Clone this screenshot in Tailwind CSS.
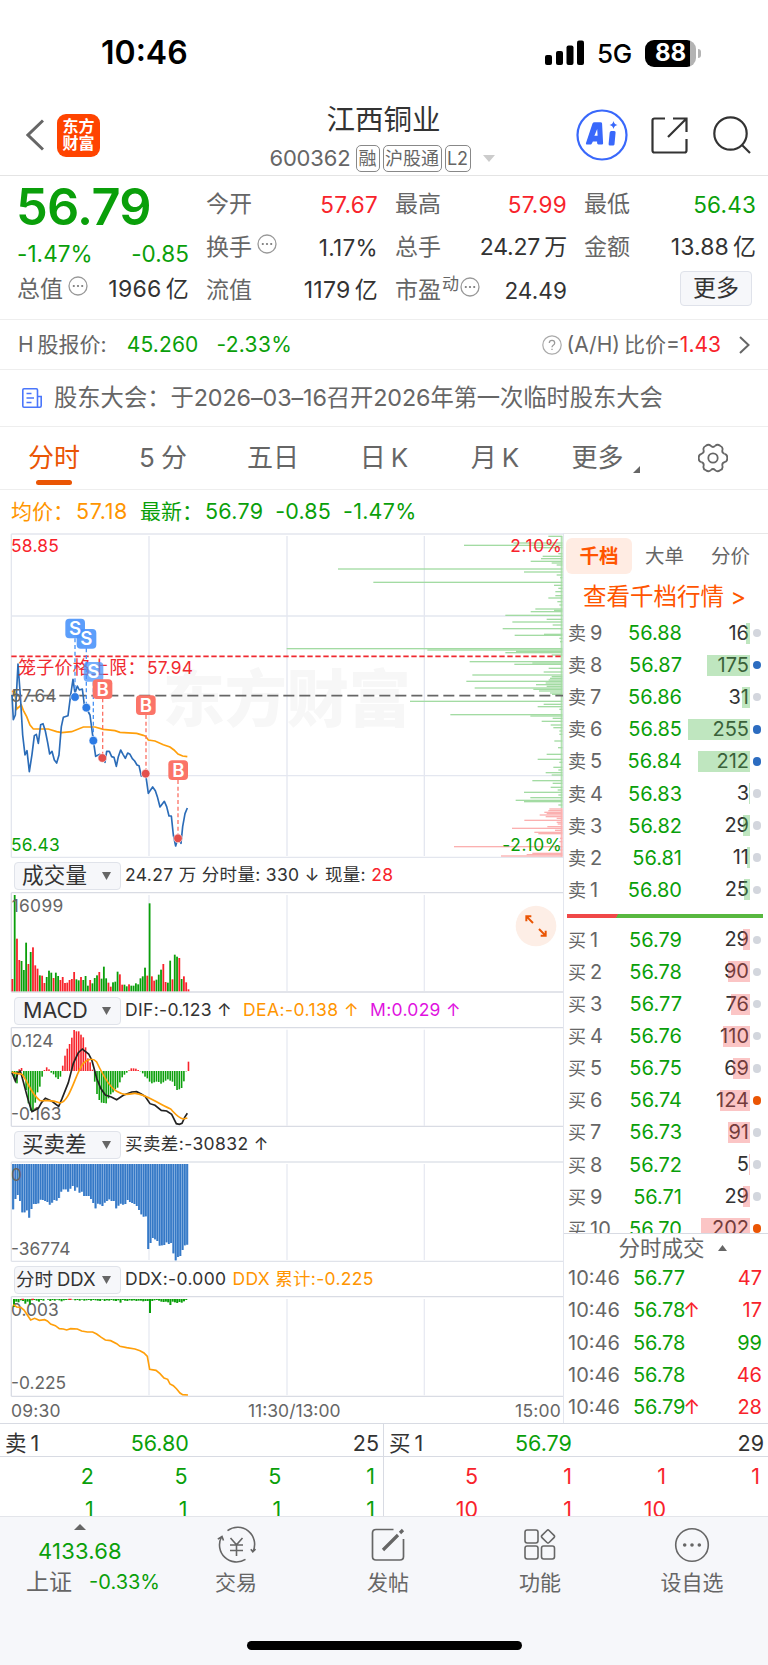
<!DOCTYPE html>
<html lang="zh-CN">
  <head>
    <meta charset="UTF-8" />
    <meta name="viewport" content="width=device-width, initial-scale=1.0" />
    <title>江西铜业 600362</title>
    <script src="https://cdn.jsdelivr.net/npm/@tailwindcss/browser@4"></script>
  </head>
  <body class="bg-white text-[#333] font-['Inter','Noto_Sans_CJK_SC',sans-serif] whitespace-nowrap">
    <div class="w-[768px] h-[1665px] overflow-hidden flex flex-col">
      <!-- Status bar -->
      <div class="h-[95px] shrink-0 flex items-center justify-between pl-[101px] pr-[67px] pt-[11px] text-black">
        <span class="text-[32px] font-semibold">10:46</span>
        <div class="flex items-center">
          <svg class="w-10 h-[26px]" viewBox="0 0 40 26">
            <rect x="0" y="15" width="7" height="10" rx="2" />
            <rect x="11" y="11" width="7" height="14" rx="2" />
            <rect x="21.500" y="5.500" width="7" height="19.500" rx="2" />
            <rect x="32" y="0.500" width="7" height="24.500" rx="2" />
          </svg>
          <span class="ml-[12px] text-[26px] font-medium tracking-[-0.2px]">5G</span>
          <div class="ml-[13px] w-[51px] h-[27px] rounded-[9px] bg-[linear-gradient(90deg,#000_45px,#b3b3b3_45px)] flex items-center justify-center text-white text-[24px] font-bold leading-none">88</div>
          <div class="ml-[2px] w-[3px] h-[9px] rounded-r-full bg-[#b3b3b3]"></div>
        </div>
      </div>

      <!-- Title bar -->
      <header class="h-[81px] shrink-0 border-b border-[#e4e4e4] grid grid-cols-[268px_230px_1fr]">
        <div class="flex items-center pl-[26px]">
          <svg class="w-[18px] h-8" viewBox="0 0 18 32" fill="none" stroke="#666" stroke-width="3"><path d="M17 1.500 2 16l15 14.500" /></svg>
          <div class="ml-[13px] w-[43px] h-[43px] rounded-[9px] bg-[#ff4400] text-white text-[16px] font-bold leading-[17px] text-center pt-[4px]">东方<br />财富</div>
        </div>
        <div class="flex flex-col items-center">
          <h1 class="mt-[7px] ml-px text-[28.500px] leading-[36px] h-[39px]">江西铜业</h1>
          <div class="flex items-center text-[#666] h-7 mt-[3px] mr-[2px]">
            <span class="text-[22px] tracking-[-0.2px] w-[86px]">600362</span>
            <span class="h-[27px] w-6 border border-[#888] rounded-[5px] text-[18px] leading-[25px] text-center flex justify-center">融</span>
            <span class="ml-[3px] h-[27px] w-[59px] border border-[#888] rounded-[5px] text-[18px] leading-[25px] flex justify-center">沪股通</span>
            <span class="ml-[3px] h-[27px] w-[26px] border border-[#888] rounded-[5px] text-[18px] leading-[25px] flex justify-center">L2</span>
            <svg class="ml-3 w-3 h-[7px]" viewBox="0 0 12 7" fill="#ccc"><path d="M0 0h12L6 7z" /></svg>
          </div>
        </div>
        <div class="flex items-center pl-[78px]">
          <svg class="w-[52px] h-[52px]" viewBox="0 0 52 52">
            <circle cx="26" cy="26" r="24.500" fill="none" stroke="#3968fb" stroke-width="2.200" />
            <path fill="#3968fb" fill-rule="evenodd" d="M16.500 14.500q.600-1.200 2-1.200h6q1.500 0 1.600 1.400l1 19.500q0 1.300-1.200 1.300h-3.400q-1.400 0-1.400-1.400v-1.600h-4.200l-1.200 2.200q-.500.900-1.500.9h-3.200q-1.700 0-1-1.500zM21.200 20l-2.800 6.800h3.200zM33.700 23.500q.200-1.500 1.700-1.500h2.800q1.600 0 1.400 1.500l-1.100 11.700q-.100 1.300-1.500 1.300h-3q-1.600 0-1.400-1.500zM37.500 12q.700 3.300 4 4-3.300.700-4 4-.700-3.300-4-4 3.300-.700 4-4z" />
          </svg>
          <svg class="ml-[23px] w-[37px] h-[37px]" viewBox="0 0 37 37" fill="none" stroke="#333" stroke-width="2.200">
            <path d="M14 1.500H3.500q-2 0-2 2v30q0 2 2 2h30q2 0 2-2V22M22 1.500h13.500V15M35 2 17 20" />
          </svg>
          <svg class="ml-[24px] w-[40px] h-[38px]" viewBox="0 0 40 38" fill="none" stroke="#333" stroke-width="2.200">
            <circle cx="18.500" cy="17.500" r="16.200" /><path d="M30 29l8 8" />
          </svg>
        </div>
      </header>

      <!-- Quote -->
      <section class="h-[144px] shrink-0 border-b border-[#eee] grid grid-cols-4 gap-x-[17px] pl-[17px] pr-[12px] text-[23px] text-[#333]">
        <div>
          <div class="h-[62px] -ml-px text-[50.500px] leading-[62px] font-semibold tracking-[-0.700px] text-[#0a9f0a]">56.79</div>
          <div class="h-[30px] pt-px flex justify-between items-center text-[22.500px] tracking-[0.050px] text-[#0a9f0a]"><span>-1.47%</span><span>-0.85</span></div>
          <div class="h-[43px] flex items-center">
            <span class="text-[#666]">总值</span>
            <svg class="ml-[5px] mb-2 w-5 h-5" viewBox="0 0 20 20"><use href="#dots" /></svg>
            <span class="ml-auto tracking-[0.300px]">1966<span class="ml-1">亿</span></span>
          </div>
        </div>
        <div class="pt-[7px]">
          <div class="h-[43px] flex items-center"><span class="text-[#666]">今开</span><span class="ml-auto text-[22.500px] tracking-[0.300px] text-[#f8232b]">57.67</span></div>
          <div class="h-[43px] flex items-center">
            <span class="text-[#666]">换手</span>
            <svg class="ml-[5px] mb-2 w-5 h-5" viewBox="0 0 20 20"><use href="#dots" /></svg>
            <span class="ml-auto text-[22.500px] tracking-[0.300px]">1.17%</span>
          </div>
          <div class="h-[43px] flex items-center"><span class="text-[#666]">流值</span><span class="ml-auto tracking-[0.300px]">1179<span class="ml-1">亿</span></span></div>
        </div>
        <div class="pt-[7px]">
          <div class="h-[43px] flex items-center"><span class="text-[#666]">最高</span><span class="ml-auto text-[22.500px] tracking-[0.300px] text-[#f8232b]">57.99</span></div>
          <div class="h-[43px] flex items-center"><span class="text-[#666]">总手</span><span class="ml-auto tracking-[-0.200px]">24.27<span class="ml-1">万</span></span></div>
          <div class="h-[43px] flex items-center text-[#666]">
            <span>市盈</span><span class="text-[17px] mb-3 ml-px">动</span>
            <svg class="ml-px mb-2 w-5 h-5" viewBox="0 0 20 20"><use href="#dots" /></svg>
            <span class="ml-auto text-[22.500px] tracking-[0.100px] text-[#333]">24.49</span>
          </div>
        </div>
        <div class="pt-[7px]">
          <div class="h-[43px] flex items-center"><span class="text-[#666]">最低</span><span class="ml-auto text-[22.500px] tracking-[0.200px] text-[#0a9f0a]">56.43</span></div>
          <div class="h-[43px] flex items-center"><span class="text-[#666]">金额</span><span class="ml-auto tracking-[0.100px]">13.88<span class="ml-1">亿</span></span></div>
          <div class="h-[43px] flex items-center justify-end pr-1"><span class="w-[72px] h-[35px] mb-1 border border-[#dfe2ea] rounded bg-[#f6f7fa] flex items-center justify-center">更多</span></div>
        </div>
      </section>

      <!-- H share price -->
      <section class="h-[50px] shrink-0 border-b border-[#eee] flex items-center pl-[18px] pr-[18px] text-[21px] text-[#666]">
        <span>H<span class="ml-1">股报价:</span></span>
        <span class="ml-[20px] tracking-[0.150px] text-[#0a9f0a]">45.260</span>
        <span class="ml-[18px] tracking-[0.300px] text-[#0a9f0a]">-2.33%</span>
        <svg class="ml-auto w-5 h-5" viewBox="0 0 20 20" fill="none">
          <circle cx="10" cy="10" r="9.200" stroke="#aaa" stroke-width="1.200" />
          <path d="M7.300 8q0-2.700 2.700-2.700T12.700 8q0 1.300-1.500 2.200Q10 11 10 12.200M10 13.700v1.400" stroke="#999" stroke-width="1.300" />
        </svg>
        <span class="ml-[5px]">(A/H)<span class="ml-1">比价</span>=<span class="text-[#f8232b]">1.43</span></span>
        <svg class="ml-[18px] w-[11px] h-[18px]" viewBox="0 0 11 18" fill="none" stroke="#666" stroke-width="2"><path d="M1 1l8.500 8L1 17" /></svg>
      </section>

      <!-- Notice -->
      <section class="h-[57px] shrink-0 border-b border-[#eee] flex items-center pl-[22px] text-[23.300px] text-[#666]">
        <svg class="w-5 h-5" viewBox="0 0 20 20" fill="none" stroke="#4a76fb" stroke-width="1.600">
          <path d="M15.500 19V2q0-1.200-1.200-1.200H2Q.800.800.800 2v16q0 1.200 1.200 1.200h15.800q1.400 0 1.400-1.400V8.500h-3.700M4.500 5.500h5M4.500 10h7.500M4.500 14.500h5" />
        </svg>
        <span class="ml-[12px]">股东大会：</span><span class="tracking-[-0.080px]">于2026–03–16召开2026年第一次临时股东大会</span>
      </section>

      <!-- Period tabs -->
      <nav class="h-[63px] shrink-0 border-b border-[#eee] flex items-start pt-[10px] text-[26px] leading-[42px] text-[#666]">
        <div class="w-[108px] flex flex-col items-center text-[#ea5504]"><span class="h-[42px]">分时</span><span class="w-9 h-[5px] rounded-full bg-[#ea5504] mt-px"></span></div>
        <div class="w-[110px] text-center">5<span class="ml-[6px]">分</span></div>
        <div class="w-[110px] text-center">五日</div>
        <div class="w-[112px] text-center">日<span class="ml-[5px]">K</span></div>
        <div class="w-[110px] text-center">月<span class="ml-[5px]">K</span></div>
        <div class="w-[111px] flex items-end justify-center">更多<svg class="ml-[9px] mb-[6px] w-[7px] h-[7px]" viewBox="0 0 7 7" fill="#666"><path d="M7 0v7H0z" /></svg></div>
        <div class="flex-1 flex justify-center pr-[3px]">
          <svg class="mt-[6px] w-[30px] h-[30px]" viewBox="-15 -15 30 30" fill="none" stroke="#666" stroke-width="1.800">
            <g id="tooth"><path id="t" d="M11.600-4.200Q14.600-3.400 14.200 0 14.600 3.400 11.600 4.200 8.660 5 9.440 7.950" /></g>
            <use href="#t" transform="rotate(60)" /><use href="#t" transform="rotate(120)" /><use href="#t" transform="rotate(180)" />
            <use href="#t" transform="rotate(240)" /><use href="#t" transform="rotate(300)" />
            <circle r="4.700" />
          </svg>
        </div>
      </nav>

      <!-- Average / latest -->
      <div class="h-[43px] shrink-0 flex items-center pl-[11px] text-[21px] text-[#0a9f0a]">
        <span class="text-[#ff9500]">均价：<span class="ml-[2px] text-[21.500px] tracking-[0.600px]">57.18</span></span>
        <span class="ml-[12px]">最新：<span class="ml-[2px] text-[21.500px] tracking-[0.300px]">56.79</span></span>
        <span class="ml-[12px] text-[21.500px] tracking-[0.150px]">-0.85</span>
        <span class="ml-[12px] text-[21.500px] tracking-[0.250px]">-1.47%</span>
      </div>

      <main class="h-[890px] shrink-0 flex">
        <!-- Charts; plots use 3 units per pixel -->
        <div class="w-[564px] shrink-0 border-r border-[#e3e6ee] flex flex-col">
          <svg class="w-[563px] h-[325px] shrink-0" viewBox="0 24 1689 975" fill="none">
            <text x="488" y="590" font-size="186" font-weight="900" fill="#f7f7f7">东方财富</text>
            <path d="M34 273H1689M34 752H1689M447 33V993M861 33V993M1273 33V993" stroke="#e4e7f0" stroke-width="4" />
            <path d="M34 27H1689M34 27V997M34 997H1689" stroke="#e3e6ee" stroke-width="4" />
            <g id="depth"></g>
            <path d="M34 394H1689" stroke="#f02a30" stroke-width="5" stroke-dasharray="16 8" />
            <path d="M34 512H1689" stroke="#666" stroke-width="5" stroke-dasharray="33 15" />
            <polyline stroke="#ff9f0a" stroke-width="5" points="36,500 44,496 50,552 64,540 70,556 80,575 90,600 100,612 145,612 170,620 185,623 215,620 250,606 285,606 310,613 345,617 360,622 410,625 430,631 437,634 445,645 465,648 490,659 510,666 522,675 534,687 548,693 562,695" />
            <polyline stroke="#2b6cb8" stroke-width="5" stroke-linejoin="round" points="36,510 40,584 46,570 54,417 61,512 68,630 75,690 81,677 88,740 96,688 103,632 109,628 115,655 122,599 129,596 136,618 143,653 149,687 156,679 163,705 170,714 177,690 184,605 190,577 204,572 212,510 219,463 225,505 232,483 238,495 247,492 253,540 262,555 270,570 280,647 287,694 300,688 315,712 320,679 328,679 335,695 342,697 349,724 355,695 362,675 369,688 376,700 383,684 390,688 397,701 404,708 411,720 417,722 424,753 437,748 445,805 458,786 466,797 472,815 480,846 493,829 500,845 507,873 514,873 520,930 527,963 534,940 543,955 548,905 555,866 562,849" />
            <g font-size="52" font-family="Inter, 'Noto Sans CJK SC'" letter-spacing="0.8">
              <text x="33" y="80" fill="#f8232b">58.85</text>
              <text x="33" y="978" fill="#0a9f0a">56.43</text>
              <text x="1687" y="80" text-anchor="end" fill="#f8232b" letter-spacing="1.8">2.10%</text>
              <text x="1687" y="978" text-anchor="end" fill="#0a9f0a" letter-spacing="1.8">-2.10%</text>
              <text x="33" y="531" fill="#666">57.64</text>
              <text x="54" y="446" font-size="54" fill="#f02a30">笼子价格上限：<tspan dx="3" font-size="52">57.94</tspan></text>
            </g>
            <g stroke-width="4" stroke-dasharray="12 8">
              <path d="M225 340V510M259 370V545M280 470V645" stroke="#4a94f5" />
              <path d="M308 520V695M438 570V745M534 765V940" stroke="#fb7468" />
            </g>
            <g fill="#2c7be5" stroke="#fff" stroke-opacity=".6" stroke-width="3"><circle cx="225" cy="516" r="13" /><circle cx="259" cy="548" r="13" /><circle cx="280" cy="647" r="13" /></g>
            <g fill="#e34f4c" stroke="#fff" stroke-opacity=".6" stroke-width="3"><circle cx="307" cy="699" r="13" /><circle cx="437" cy="746" r="13" /><circle cx="534" cy="940" r="13" /></g>
            <g fill="#4a94fb" fill-opacity=".9"><rect x="196" y="281" width="59" height="59" rx="12" /><rect x="230" y="312" width="59" height="59" rx="12" /><rect x="251" y="411" width="59" height="59" rx="12" fill-opacity=".75" /></g>
            <g fill="#fb7468"><rect x="278" y="463" width="59" height="59" rx="12" /><rect x="408" y="511" width="59" height="59" rx="12" /><rect x="505" y="706" width="59" height="59" rx="12" /></g>
            <g fill="#fff" font-size="56" font-weight="600" text-anchor="middle" font-family="Inter">
              <text x="225" y="330">S</text><text x="259" y="361">S</text><text x="280" y="460">S</text>
              <text x="308" y="513">B</text><text x="438" y="561">B</text><text x="535" y="756">B</text>
            </g>
          </svg>

          <div class="h-[34px] shrink-0 flex items-center pl-[14px] pt-px text-[17.500px] tracking-[0.200px]">
            <span class="w-[107px] h-[28px] border border-[#e0e3ea] rounded bg-[#f6f7fa] flex items-center pl-[7px] text-[21.500px]">成交量<svg class="ml-auto mr-[9px] w-[9px] h-[8px]" viewBox="0 0 9 8" fill="#666"><path d="M0 0h9L4.500 8z" /></svg></span>
            <span class="ml-[4px] tracking-[0.330px]">24.27 万 分时量: 330 ↓ 现量: <span class="text-[#f8232b]">28</span></span>
          </div>
          <svg class="w-[563px] h-[101px] shrink-0" viewBox="0 96 1689 303" fill="none">
            <path d="M447 105V393M861 105V393M1273 105V393" stroke="#e8eaf2" stroke-width="4" />
            <path d="M34 98H1689M34 98V396M34 396H1689" stroke="#d9dce4" stroke-width="4" />
            <g id="volume"></g>
            <text x="35" y="156" font-size="52" letter-spacing="1" fill="#666">16099</text>
            <circle cx="1608" cy="198" r="61" fill="#fdeee6" />
            <path d="M1599 189l-19-19M1579 184v-15h15M1617 207l19 19M1637 212v15h-15" stroke="#ea5504" stroke-width="6" />
          </svg>

          <div class="h-[34px] shrink-0 flex items-center pl-[14px] pt-px text-[17.500px]">
            <span class="w-[107px] h-[28px] border border-[#e0e3ea] rounded bg-[#f6f7fa] flex items-center pl-2 text-[21.500px]">MACD<svg class="ml-auto mr-[9px] w-[9px] h-[8px]" viewBox="0 0 9 8" fill="#666"><path d="M0 0h9L4.500 8z" /></svg></span>
            <span class="ml-[4px] tracking-[0.330px]">DIF:-0.123 ↑</span>
            <span class="ml-[11px] tracking-[0.450px] text-[#ff9500]">DEA:-0.138 ↑</span>
            <span class="ml-[11px] tracking-[0.300px] text-[#e012e0]">M:0.029 ↑</span>
          </div>
          <svg class="w-[563px] h-[100px] shrink-0" viewBox="0 501 1689 300" fill="none">
            <path d="M447 509V797M861 509V797M1273 509V797" stroke="#e8eaf2" stroke-width="4" />
            <path d="M34 503H1689M34 503V799M34 799H1689" stroke="#d9dce4" stroke-width="4" />
            <text x="33" y="561" font-size="52" fill="#666">0.124</text>
            <text x="33" y="780" font-size="52" fill="#666">-0.163</text>
            <g id="macd"></g>
            <path stroke="#222" stroke-width="5" d="M36 638L46 663 54 638 61 634C72 668 82 720 96 755L115 745 125 727 136 715 156 724 176 739 186 716 205 668 220 610 235 578 247 567 266 582 276 602 290 655 302 685 316 705 334 711 350 719 370 706 395 696 410 695 425 703 436 710 450 731 465 736 484 751 500 753 515 763 529 791 538 793 546 790 554 772 562 760" />
            <path stroke="#ff9f0a" stroke-width="5" d="M36 636C48 644 58 638 66 643C84 665 92 700 120 722C140 724 150 717 180 729C210 725 226 640 250 610C266 595 280 594 290 606C306 640 326 680 350 694C370 706 380 704 405 700C440 702 470 730 512 747C526 762 536 775 550 777L562 774" />
          </svg>

          <div class="h-[34px] shrink-0 flex items-center pl-[14px] pt-px text-[17.500px]">
            <span class="w-[107px] h-[28px] border border-[#e0e3ea] rounded bg-[#f6f7fa] flex items-center pl-[7px] text-[21.500px]">买卖差<svg class="ml-auto mr-[9px] w-[9px] h-[8px]" viewBox="0 0 9 8" fill="#666"><path d="M0 0h9L4.500 8z" /></svg></span>
            <span class="ml-[4px] tracking-[0.400px]">买卖差:-30832 ↑</span>
          </div>
          <svg class="w-[563px] h-[101px] shrink-0" viewBox="0 93 1689 303" fill="none">
            <path d="M447 102V390M861 102V390M1273 102V390" stroke="#e8eaf2" stroke-width="4" />
            <path d="M34 96H1689M34 96V394M34 394H1689" stroke="#e0e3ea" stroke-width="4" />
            <g id="spread"></g>
            <text x="33" y="154" font-size="52" fill="#666">0</text>
            <text x="33" y="374" font-size="52" fill="#666">-36774</text>
          </svg>

          <div class="h-[34px] shrink-0 flex items-center pl-[14px] pt-px text-[17.500px]">
            <span class="w-[107px] h-[28px] border border-[#e0e3ea] rounded bg-[#f6f7fa] flex items-center pl-px text-[18.500px]">分时<span class="ml-1">DDX</span><svg class="ml-auto mr-[9px] w-[9px] h-[8px]" viewBox="0 0 9 8" fill="#666"><path d="M0 0h9L4.500 8z" /></svg></span>
            <span class="ml-[4px] tracking-[0.350px]">DDX:-0.000</span>
            <span class="ml-[6px] tracking-[0.300px] text-[#ff9500]">DDX 累计:-0.225</span>
          </div>
          <svg class="w-[563px] h-[101px] shrink-0" viewBox="0 498 1689 303" fill="none">
            <path d="M447 507V796M861 507V796M1273 507V796" stroke="#e8eaf2" stroke-width="4" />
            <path d="M34 500H1689M34 500V799M34 799H1689" stroke="#d9dce4" stroke-width="4" />
            <text x="33" y="559" font-size="52" fill="#666">0.003</text>
            <text x="33" y="778" font-size="52" fill="#666">-0.225</text>
            <g id="ddx"></g>
            <path d="M64 508h8M94 508h8M205 508h10" stroke="#f8232b" stroke-width="4" />
            <polyline stroke="#ff9f0a" stroke-width="5" points="40,524 50,531 62,532 72,540 84,558 92,570 104,565 118,571 134,569 142,573 152,582 166,587 178,596 190,597 200,600 212,596 232,597 245,603 262,606 278,606 290,612 304,622 316,630 332,632 350,641 360,649 380,653 405,657 420,662 432,669 442,679 449,718 468,721 480,731 492,744 503,748 510,762 520,767 530,777 540,789 548,794 564,795" />
          </svg>

          <div class="h-[26px] flex items-center pl-[11px] pt-[2px] pr-[2px] text-[17.500px] text-[#666]">
            <span class="w-[237px] tracking-[0.200px]">09:30</span><span>11:30/13:00</span><span class="ml-auto tracking-[0.200px]">15:00</span>
          </div>
        </div>

        <!-- Order book -->
        <aside class="flex-1 flex flex-col border-t border-[#e8e8e8]">
          <div class="h-[44px] shrink-0 flex pl-[2px] pt-1 text-[19.500px] leading-[36px] text-[#666]">
            <span class="w-[66px] h-9 rounded-md bg-[#ffece3] text-center font-bold text-[#ff5500]">千档</span>
            <span class="w-[65px] text-center">大单</span>
            <span class="w-[67px] text-center">分价</span>
          </div>
          <div class="h-[39px] shrink-0 pl-[19px] text-[23.500px] leading-[38px] text-[#ff5500]">查看千档行情 <span>&gt;</span></div>
          <div id="asks" class="shrink-0"></div>
          <div class="h-[18px] shrink-0 pl-[3px] pt-[8px]"><div class="w-[196px] h-[4px] bg-[linear-gradient(125deg,#f04848_42px,#58b840_42px)]"></div></div>
          <div id="bids" class="h-[309px] shrink-0 overflow-hidden"></div>
          <div class="h-[29px] shrink-0 border-t border-[#d8dbe3] flex items-center justify-center gap-[13px] pl-[17px] pr-1 text-[21.500px] text-[#666]">分时成交<svg class="w-[9px] h-[6px]" viewBox="0 0 9 6" fill="#666"><path d="M4.500 0 9 6H0z" /></svg></div>
          <div id="trades"></div>
        </aside>
      </main>

      <!-- Level-2 queue -->
      <section class="h-[93px] shrink-0 overflow-hidden grid grid-cols-2 text-[21.500px]">
        <div class="border-r border-[#d8dbe3]">
          <div class="h-[34px] border-y border-[#d8dbe3] grid grid-cols-3 items-center pt-[3px] pl-[5px] pr-1"><span>卖<span class="ml-1">1</span></span><span class="text-[#0a9f0a] pl-px">56.80</span><span class="text-right">25</span></div>
          <div id="ask_queue" class="grid grid-cols-4 pr-[8px] leading-[33px] pt-[3px] text-right text-[#0a9f0a]"></div>
        </div>
        <div>
          <div class="h-[34px] border-y border-[#d8dbe3] grid grid-cols-3 items-center pt-[3px] pl-[5px] pr-1"><span>买<span class="ml-1">1</span></span><span class="text-[#0a9f0a] pl-px">56.79</span><span class="text-right">29</span></div>
          <div id="bid_queue" class="grid grid-cols-4 pr-[8px] leading-[33px] pt-[3px] text-right text-[#f8232b]"></div>
        </div>
      </section>

      <!-- Bottom bar -->
      <footer class="flex-1 bg-[#f6f7fa] border-t border-[#e3e5ea] flex flex-col text-[#666]">
        <div class="h-[124px] flex">
          <div class="w-[160px] flex flex-col items-center">
            <svg class="mt-[7px] w-3 h-[6px]" viewBox="0 0 12 6" fill="#666"><path d="M6 0l6 6H0z" /></svg>
            <span class="mt-[5px] h-8 leading-8 text-[22px] tracking-[0.200px] text-[#0a9f0a]">4133.68</span>
            <div class="h-[30px] w-[134px] ml-[26px] flex items-center justify-between text-[23px]">上证<span class="text-[20px] text-[#0a9f0a]">-0.33%</span></div>
          </div>
          <div class="w-[152px] flex flex-col items-center pt-[9px]">
            <svg class="w-[39px] h-[38px]" viewBox="0 0 39 38" fill="none" stroke="#666" stroke-width="1.600">
              <path d="M10.500 4.600A17 17 0 0 1 36 25.500M38.500 23l-2.700 2.700-2-2.500M28.500 33.400A17 17 0 0 1 4.500 11M.800 13.200 5 10.500l1.500 4M13.500 12l6 6.800 6-6.800M13 19h13M13 24.500h13M19.500 19v11" />
            </svg>
            <span class="mt-[3px] h-8 leading-8 text-[21px]">交易</span>
          </div>
          <div class="w-[152px] flex flex-col items-center pt-[9px]">
            <svg class="w-[34px] h-[38px]" viewBox="0 0 34 38" fill="none" stroke="#666" stroke-width="1.700">
              <path d="M22.500 3.500H5q-3.500 0-3.500 3.500v23.500Q1.500 34 5 34h24q3.500 0 3.500-3.500V13" />
              <path d="M12 24 27 9M29 7l3-3" stroke-width="3.200" />
            </svg>
            <span class="mt-[3px] h-8 leading-8 text-[21px]">发帖</span>
          </div>
          <div class="w-[152px] flex flex-col items-center pt-[9px]">
            <svg class="w-[32px] h-[38px]" viewBox="0 0 32 38" fill="none" stroke="#666" stroke-width="1.600">
              <rect x="1" y="4" width="13" height="13" rx="2.200" /><rect x="1" y="20" width="13" height="13" rx="2.200" /><rect x="17.500" y="20" width="13" height="13" rx="2.200" />
              <rect x="19" y="5.500" width="10" height="10" rx="1.500" transform="rotate(45 24 10.500)" />
            </svg>
            <span class="mt-[3px] h-8 leading-8 text-[21px]">功能</span>
          </div>
          <div class="w-[152px] flex flex-col items-center pt-[9px]">
            <svg class="w-[36px] h-[38px]" viewBox="0 0 36 38" fill="none" stroke="#666" stroke-width="1.600">
              <circle cx="18" cy="19" r="16.300" />
              <g fill="#666" stroke="none"><circle cx="10.700" cy="19" r="1.800" /><circle cx="18" cy="19" r="1.800" /><circle cx="25.300" cy="19" r="1.800" /></g>
            </svg>
            <span class="mt-[3px] h-8 leading-8 text-[21px]">设自选</span>
          </div>
        </div>
        <div class="mx-auto w-[275px] h-[9px] rounded-full bg-black"></div>
      </footer>
    </div>

    <svg class="hidden">
      <symbol id="dots" viewBox="0 0 20 20">
        <circle cx="10" cy="10" r="9" fill="none" stroke="#999" stroke-width="1.300" />
        <circle cx="5.800" cy="10" r="1.100" fill="#777" /><circle cx="10" cy="10" r="1.100" fill="#777" /><circle cx="14.200" cy="10" r="1.100" fill="#777" />
      </symbol>
    </svg>

    <script>
      const GREEN = "#0a9f0a";
      const RED = "#f8232b";
      const el = (id) => document.getElementById(id);
      const rect = (x, y, w, h, fill) =>
        `<rect x="${x}" y="${y}" width="${w}" height="${h}" fill="${fill}" />`;

      // volume bars: top edge and direction
      const volume =
        "357r 105g 236r 300r 303g 330g 248g 312r 276g 262r 316r 326r 346g 347r 369r 351g 332g 338g 354r 338g 348g 360r 351r 369r 368r 360r 357r 336r 358g 361g 351r 360g 348g 377g 360r 370g 354g 346g 336r 356g 320g 355g 368r 380r 367g 365g 335g 343r 374r 374g 379g 373r 377g 377g 370g 373g 355g 349g 323g 347r 130g 349r 362r 359g 344g 329g 312r 366r 368g 302g 358r 284g 290g 294r 357g 349r 367r 388r".split(" ");
      el("volume").innerHTML = volume
        .map((v, i) => {
          const top = parseInt(v);
          return rect(34.5 + i * 6.86, top, 5.4, 394 - top, v.endsWith("r") ? RED : GREEN);
        })
        .join("");

      const macd = [
        640, 660, 670, 628, 624, 650, 690, 730, 752, 755, 728, 697, 680, 650, 630, 622, 628, 638, 643, 652,
        657, 650, 617, 587, 566, 552, 533, 510, 514, 514, 524, 532, 562, 595, 607, 629, 665, 702, 720, 728,
        729, 730, 715, 703, 697, 688, 683, 667, 652, 644, 638, 631, 625, 625, 626, 630, 634, 640, 650, 655,
        665, 670, 667, 665, 666, 671, 667, 662, 658, 662, 665, 678, 690, 688, 684, 664, 634, 605,
      ];
      el("macd").innerHTML = macd
        .map((v, i) => rect(34.8 + i * 6.86, Math.min(v, 633), 4.8, Math.abs(v - 633), v < 633 ? RED : GREEN))
        .join("");

      const spread = [
        238, 207, 195, 213, 247, 247, 241, 263, 237, 222, 222, 220, 209, 210, 213, 216, 224, 218, 210, 212,
        204, 185, 178, 178, 185, 176, 168, 182, 172, 188, 185, 198, 198, 198, 207, 219, 235, 221, 223, 228,
        218, 213, 208, 213, 213, 235, 227, 221, 224, 222, 210, 216, 219, 222, 228, 240, 253, 260, 259, 357,
        339, 324, 328, 333, 347, 346, 345, 337, 342, 339, 370, 391, 381, 378, 360, 346, 344,
      ];
      el("spread").innerHTML = spread
        .map((v, i) => rect(36.5 + i * 6.87, 102, 6.87, v - 102, "#9cbfe8") + rect(36.5 + i * 6.87, 102, 5.2, v - 102, "#3478c6"))
        .join("");

      const ddx = [
        24, 8, 10, 4, 6, 14, 8, 17, 4, 3, 5, 8, 3, 5, 0, 2, 6, 3, 5, 2, 4, 7, 4, 3, 2, 0, 1, 4, 3, 5, 2, 5, 4, 3, 5,
        3, 4, 5, 6, 2, 6, 4, 5, 3, 5, 6, 4, 11, 3, 5, 6, 4, 5, 4, 6, 5, 5, 7, 6, 6, 42, 6, 4, 3, 5, 8, 9, 8, 10, 18,
        8, 10, 12, 9, 11, 7, 3,
      ];
      el("ddx").innerHTML = ddx.map((v, i) => rect(39 + i * 6.8, 507, 6, v, GREEN)).join("");

      // resting orders by price, [y, left edge]
      const depth = [
        [34, 805], [54, 700], [61, 552], [68, 760], [86, 835], [94, 788], [101, 783], [109, 752], [114, 815], [120, 830],
        [132, 174], [141, 732], [150, 830], [158, 840], [172, 280], [181, 822], [190, 835], [200, 826], [212, 826], [219, 805],
        [230, 832], [240, 838], [252, 766], [256, 822], [260, 752], [271, 676], [283, 800], [291, 697], [300, 818], [311, 668],
        [328, 792], [331, 704], [340, 838], [350, 840], [371, 20], [375, 442], [379, 708], [383, 676], [390, 815], [410, 569],
        [414, 757], [418, 703], [430, 806], [441, 791], [450, 577], [455, 815], [460, 810], [465, 806], [469, 559], [474, 797],
        [479, 768], [484, 800], [489, 584], [493, 760], [498, 777], [504, 810], [508, 816], [529, 390], [538, 791], [545, 773],
        [553, 838], [569, 511], [573, 751], [580, 818], [589, 785], [600, 812], [608, 820], [618, 838], [628, 838], [648, 823],
        [668, 834], [688, 800], [703, 773], [712, 838], [727, 820], [735, 835], [743, 797], [750, 815], [767, 757], [775, 818],
        [787, 812], [795, 833], [802, 732], [810, 835], [818, 751], [826, 707], [830, 732], [840, 835], [852, 808], [857, 805],
        [862, 793], [866, 800], [870, 779], [875, 797], [880, 830], [886, 733], [892, 830], [897, 833], [905, 802], [910, 696],
        [916, 825], [922, 763], [926, 775], [940, 840], [950, 838], [965, 522], [975, 840], [985, 757], [989, 740], [993, 663],
      ];
      el("depth").innerHTML =
        rect(1682, 34, 6, 816, "#b4e2b4") +
        rect(1682, 850, 6, 145, "#fbb8b8") +
        depth.map(([y, x]) => rect(x + 840, y - 2, 847 - x, 4, y < 850 ? "#a3dba3" : "#fbb0b0")).join("");

      const bookRow = (side, n, price, size, big, ask) => `
        <div class="h-[32.1px] flex items-center text-[20px]">
          <span class="w-[53px] pl-[4px] text-[#666]"><span class="text-[18px]">${side}</span><span class="ml-[4px]">${n}</span></span>
          <span class="w-[65px] text-right text-[#0a9f0a]">${price}</span>
          <span class="relative flex-1 h-[21px] leading-[21px] text-right pr-px">${size}
            <span class="absolute right-0 top-0 h-full ${ask ? "bg-[#48b848]/35" : "bg-[#f45050]/33"}" style="width:${Math.max(size * 0.245, 1)}px"></span>
          </span>
          <span class="ml-[2.5px] mr-[7px] size-[8.5px] rounded-full ${big ? (ask ? "bg-[#2c6cc0]" : "bg-[#ea5504]") : "bg-[#d3d6dd]"}"></span>
        </div>`;

      const asks = [[9, "56.88", 16], [8, "56.87", 175], [7, "56.86", 31], [6, "56.85", 255], [5, "56.84", 212], [4, "56.83", 3], [3, "56.82", 29], [2, "56.81", 11], [1, "56.80", 25]];
      const bids = [[1, "56.79", 29], [2, "56.78", 90], [3, "56.77", 76], [4, "56.76", 110], [5, "56.75", 69], [6, "56.74", 124], [7, "56.73", 91], [8, "56.72", 5], [9, "56.71", 29], [10, "56.70", 202]];
      el("asks").innerHTML = asks.map(([n, p, s]) => bookRow("卖", n, p, s, s > 120, true)).join("");
      el("bids").innerHTML = bids.map(([n, p, s]) => bookRow("买", n, p, s, s > 120, false)).join("");

      const trades = [["56.77", "", 47], ["56.78", "↑", 17], ["56.78", "", 99], ["56.78", "", 46], ["56.79", "↑", 28]];
      el("trades").innerHTML = trades
        .map(
          ([p, arrow, n]) => `
        <div class="h-[32.3px] flex items-center pl-[4px] pr-[6px] text-[20px] text-[#666]">
          <span class="w-[65px]">10:46</span>
          <span class="text-[#0a9f0a] tracking-[-0.1px]">${p}</span><span class="text-[#f8232b] -ml-[2px]">${arrow}</span>
          <span class="ml-auto ${n === 99 ? "text-[#0a9f0a]" : "text-[#f8232b]"}">${n}</span>
        </div>`
        )
        .join("");

      const queue = (list) => list.map((n) => `<span>${n}</span>`).join("");
      el("ask_queue").innerHTML = queue([2, 5, 5, 1, 1, 1, 1, 1]);
      el("bid_queue").innerHTML = queue([5, 1, 1, 1, 10, 1, 10]);
    </script>
  </body>
</html>
